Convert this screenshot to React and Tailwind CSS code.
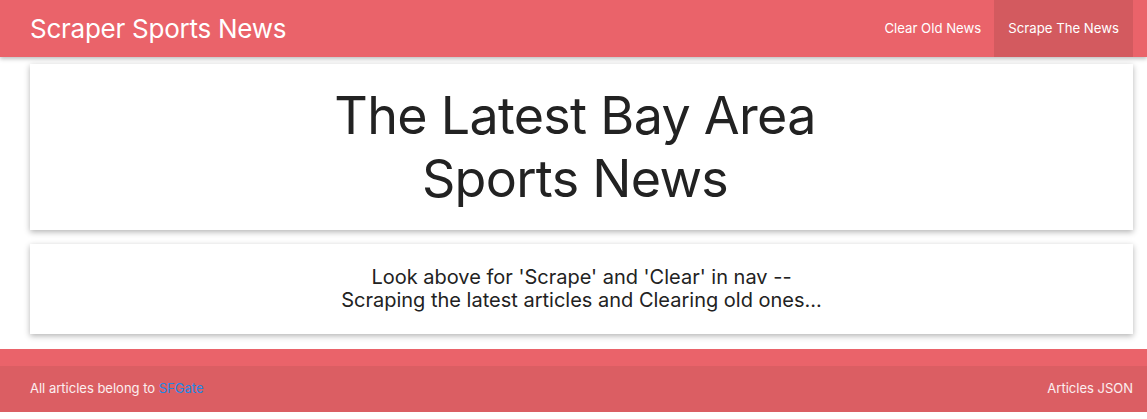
export default function App() {
  return (
    <div className="min-h-[419px] bg-white font-['Inter','Liberation_Sans',sans-serif] text-[#212121]">
      <nav className="flex h-[57px] items-center justify-between bg-[#ea636a] pl-[30px] pr-[14px] shadow-[0_2px_4px_rgba(0,0,0,0.25)] relative z-10">
        <span className="text-[26px] leading-none tracking-[-0.25px] text-white">Scraper Sports News</span>
        <ul className="flex h-full items-stretch text-[13.2px] text-white">
          <li className="flex items-center px-[13px]">Clear Old News</li>
          <li className="flex items-center bg-[#d35a5f] px-[14px]">Scrape The News</li>
        </ul>
      </nav>
      <main className="flex flex-col gap-[14px] pl-[30px] pr-[14px] pt-[7px] pb-[15px]">
        <section className="flex h-[166px] flex-col items-center justify-center bg-white shadow-[0_2px_6px_rgba(0,0,0,0.3)]">
          <h1 className="mr-[13px] text-center text-[52px] leading-[63px] tracking-[-0.7px] text-[#222]">
            The Latest Bay Area
            <br />
            Sports News
          </h1>
        </section>
        <section className="flex h-[90px] flex-col items-center justify-center bg-white shadow-[0_2px_6px_rgba(0,0,0,0.3)]">
          <p className="text-center text-[20px] leading-[23px] text-[#222]">
            Look above for 'Scrape' and 'Clear' in nav --
            <br />
            Scraping the latest articles and Clearing old ones...
          </p>
        </section>
      </main>
      <footer className="bg-[#ea636a] pt-[17px]">
        <div className="flex h-[46px] items-center justify-between bg-[#db5e63] px-[14px] pl-[30px] text-[13px] text-white/90">
          <span>
            All articles belong to <a className="text-[#1e88e5]">SFGate</a>
          </span>
          <span>Articles JSON</span>
        </div>
      </footer>
    </div>
  );
}
